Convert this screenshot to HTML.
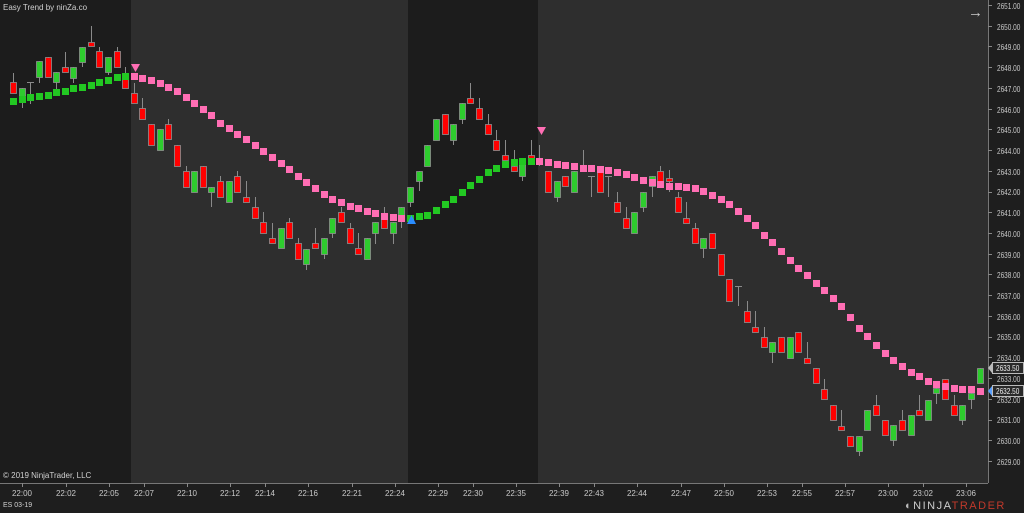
<!DOCTYPE html>
<html><head><meta charset="utf-8"><style>
html,body{margin:0;padding:0;background:#1e1e1e;width:1024px;height:513px;overflow:hidden;font-family:"Liberation Sans",sans-serif}
#c{position:absolute;left:0;top:0}
.t{position:absolute;color:#d0d0d0;font-size:8px;white-space:nowrap}
.p{position:absolute;left:997px;color:#c8c8c8;font-size:8.5px;transform:scaleX(0.76);transform-origin:0 0;white-space:nowrap}
.tm{position:absolute;top:489px;color:#c8c8c8;font-size:8px;transform:translateX(-50%)}
.bx{position:absolute;left:992px;width:30px;height:10px;background:#2a2a2a;border:1px solid #bbb;color:#eee;font-size:8.5px;line-height:10px;overflow:hidden;white-space:nowrap}
.bx span{display:inline-block;transform:scaleX(0.76);transform-origin:0 0;margin-left:3px}
</style></head><body>
<svg id="c" width="1024" height="513" xmlns="http://www.w3.org/2000/svg">
<rect x="0" y="0" width="1024" height="513" fill="#1e1e1e"/>
<rect x="0" y="0" width="988" height="483" fill="#2e2e2e"/>
<rect x="0" y="0" width="131" height="483" fill="#1c1c1c"/>
<rect x="408" y="0" width="130" height="483" fill="#1c1c1c"/>
<line x1="988.5" y1="0" x2="988.5" y2="483" stroke="#777"/>
<line x1="0" y1="483.5" x2="988" y2="483.5" stroke="#777"/>
<g id="g"></g>
</svg>
<div class="t" style="left:3px;top:3px">Easy Trend by ninZa.co</div>
<div class="t" style="left:3px;top:471px">© 2019 NinjaTrader, LLC</div>
<div class="t" style="left:3px;top:502px;font-size:7px">ES 03-19</div>
<div class="t" style="left:968px;top:4px;font-size:15px;color:#ccc">→</div>
<div class="t" style="left:905px;top:500px;font-size:11px;letter-spacing:1.5px;color:#bbb">◐<span style="color:#ccc">NINJA</span><span style="color:#c0392b">TRADER</span></div>
<div class="bx" style="top:362px"><span>2633.50</span></div>
<div class="bx" style="top:385px"><span>2632.50</span></div>
<div class="tm" style="left:22px">22:00</div><div class="tm" style="left:66px">22:02</div><div class="tm" style="left:109px">22:05</div><div class="tm" style="left:144px">22:07</div><div class="tm" style="left:187px">22:10</div><div class="tm" style="left:230px">22:12</div><div class="tm" style="left:265px">22:14</div><div class="tm" style="left:308px">22:16</div><div class="tm" style="left:352px">22:21</div><div class="tm" style="left:395px">22:24</div><div class="tm" style="left:438px">22:29</div><div class="tm" style="left:473px">22:30</div><div class="tm" style="left:516px">22:35</div><div class="tm" style="left:559px">22:39</div><div class="tm" style="left:594px">22:43</div><div class="tm" style="left:637px">22:44</div><div class="tm" style="left:681px">22:47</div><div class="tm" style="left:724px">22:50</div><div class="tm" style="left:767px">22:53</div><div class="tm" style="left:802px">22:55</div><div class="tm" style="left:845px">22:57</div><div class="tm" style="left:888px">23:00</div><div class="tm" style="left:923px">23:02</div><div class="tm" style="left:966px">23:06</div>
<div class="p" style="top:1px">2651.00</div><div class="p" style="top:22px">2650.00</div><div class="p" style="top:42px">2649.00</div><div class="p" style="top:63px">2648.00</div><div class="p" style="top:84px">2647.00</div><div class="p" style="top:105px">2646.00</div><div class="p" style="top:125px">2645.00</div><div class="p" style="top:146px">2644.00</div><div class="p" style="top:167px">2643.00</div><div class="p" style="top:187px">2642.00</div><div class="p" style="top:208px">2641.00</div><div class="p" style="top:229px">2640.00</div><div class="p" style="top:250px">2639.00</div><div class="p" style="top:270px">2638.00</div><div class="p" style="top:291px">2637.00</div><div class="p" style="top:312px">2636.00</div><div class="p" style="top:332px">2635.00</div><div class="p" style="top:353px">2634.00</div><div class="p" style="top:374px">2633.00</div><div class="p" style="top:395px">2632.00</div><div class="p" style="top:415px">2631.00</div><div class="p" style="top:436px">2630.00</div><div class="p" style="top:457px">2629.00</div>
<script>
var B=[
['r',82,93,73,93],['g',88,102,88,108],['d',82,83,82,104],['g',61,77,61,83],['r',57,77,57,77],['g',72,82,72,90],['r',67,72,52,72],['g',67,78,67,83],['g',47,62,47,67],['r',42,46,26,46],['r',51,67,47,67],['g',57,72,57,75],['r',51,67,47,67],['r',73,88,67,88],
['r',93,103,83,103],['r',108,119,98,119],['r',124,145,124,145],['g',129,150,129,150],['r',124,139,119,139],['r',145,166,145,166],['r',171,187,166,187],['g',171,192,171,192],['r',166,187,166,187],['g',187,192,187,207],['r',181,197,176,197],['g',181,202,181,202],['r',176,192,171,192],['r',197,202,181,202],['r',207,218,197,218],['r',222,233,212,233],['r',238,243,223,243],['g',228,248,228,248],['r',222,238,218,238],['r',243,259,238,259],['g',249,264,249,270],['r',243,248,228,248],['g',238,254,238,259],['g',218,233,218,238],['r',212,222,207,222],['r',228,243,223,243],['r',248,254,233,254],['g',238,259,238,259],['g',222,233,222,244],['r',218,228,207,228],['g',222,233,222,244],['g',207,218,207,228],['g',187,202,187,207],
['g',171,181,171,191],['g',145,166,145,166],['g',119,140,119,140],['r',114,134,114,134],['g',124,140,124,145],['g',103,119,103,124],['r',98,103,83,103],['r',108,119,98,119],['r',124,134,114,134],['r',140,150,130,150],['r',155,160,140,160],['r',166,171,150,171],['g',159,176,159,181],['r',155,158,140,158],['r',160,163,145,166],['r',171,192,171,192],['g',181,197,181,202],['r',176,186,176,186],['g',171,192,171,192],['r',165,170,150,170],['d',176,177,176,197],['r',171,192,171,192],['d',176,177,176,197],['r',202,212,192,212],['r',218,228,207,228],['g',212,233,212,233],['g',192,207,192,212],['g',176,186,176,197],['r',171,181,166,181],['r',178,181,170,192],['r',197,212,192,212],['r',218,223,202,223],['r',228,243,223,243],
['g',238,248,238,258],['r',233,248,233,248],['r',254,275,254,275],['r',279,301,279,301],['d',286,287,286,306],['r',311,322,301,322],['r',327,332,311,332],['r',337,347,327,347],['g',342,352,342,363],['r',337,352,337,352],['g',337,358,337,358],['r',332,352,332,352],['r',358,363,342,363],['r',368,383,368,383],['r',389,399,379,399],['r',405,420,405,420],['r',426,430,410,430],['r',436,446,436,446],['g',436,451,436,456],['g',410,430,410,430],['r',405,415,395,415],['r',420,435,420,435],['g',425,440,425,446],['r',420,430,410,430],['g',415,435,415,435],['r',410,415,395,415],['g',400,420,400,420],['g',388,393,388,404],['r',379,399,379,399],['r',405,415,395,415],['g',405,420,405,425],['g',393,399,393,409],['g',368,383,368,383]];
var P=[[13,101],[22,99],[31,97],[39,96],[48,95],[56,92],[65,91],[74,88],[82,87],[91,85],[100,82],[108,80],[117,77],[126,76],[135,76],[143,78],[152,80],[160,83],[169,87],[178,92],[187,98],[196,104],[204,110],[213,117],[221,124],[230,129],[239,135],[248,140],[256,146],[265,152],[274,158],[282,164],[291,171],[300,177],[308,184],[317,189],[326,195],[334,200],[343,203],[351,206],[360,209],[369,211],[377,214],[386,216],[395,217],[403,218],[412,218],[421,216],[429,214],[438,209],[447,203],[455,197],[464,190],[473,183],[481,177],[490,171],[499,167],[507,163],[516,162],[525,161],[533,161],[542,161],[551,162],[559,164],[568,165],[577,166],[585,168],[603,169],[611,171],[620,172],[629,175],[637,178],[646,181],[655,183],[663,185],[672,186],[681,186],[690,187],[698,189],[707,193],[716,196],[724,201],[733,207],[741,213],[750,221],[759,229],[767,238],[776,246],[785,255],[794,264],[802,271],[811,279],[820,286],[828,294],[837,302],[846,312],[854,322],[863,332],[872,341],[880,349],[889,357],[897,363],[906,369],[915,374],[924,379],[932,383],[941,385],[950,387],[958,389],[967,389],[976,390],[984,391]];
function iy(x){for(var i=0;i<P.length-1;i++){if(x<=P[i+1][0])return P[i][1]+(P[i+1][1]-P[i][1])*(x-P[i][0])/(P[i+1][0]-P[i][0]);}return P[P.length-1][1];}
var h='';
B.forEach(function(b,i){var x=13+8.63*i,xs=Math.round(x);
h+='<line x1="'+(xs+.5)+'" y1="'+b[3]+'" x2="'+(xs+.5)+'" y2="'+b[4]+'" stroke="#8a8a8a"/>';
var c=b[0]=='g'?'#2ecc2e':(b[0]=='r'?'#ff0000':'#8a8a8a');var hh=Math.max(b[2]-b[1],1);
if(b[0]=='d')h+='<rect x="'+(xs-3)+'" y="'+b[1]+'" width="7" height="1" fill="#8a8a8a"/>';
else h+='<rect x="'+(xs-2.5)+'" y="'+(b[1]+.5)+'" width="6" height="'+hh+'" fill="'+c+'" stroke="#909090" stroke-width="0.8"/>';});
B.forEach(function(b,i){var x=Math.round(13+8.63*i),y=Math.round(iy(x));
var pink=(i>=14&&i<=45)||i>=61;var col=pink?'#ff6eb4':'#22c822';
h+='<rect x="'+(x-3)+'" y="'+(y-3)+'" width="7" height="7" fill="'+col+'"/>';});
h+='<polygon points="131,64 140,64 135.5,72" fill="#ff6eb4"/>';
h+='<polygon points="407,224 416,224 411.5,215" fill="#2a8cff"/>';
h+='<polygon points="537,127 546,127 541.5,135" fill="#ff6eb4"/>';
for(var p=0;p<23;p++){var y=Math.round(5+p*20.73)+.5;h+='<line x1="988" y1="'+y+'" x2="992" y2="'+y+'" stroke="#888"/>';}
[22,66,109,144,187,230,265,308,352,395,438,473,516,559,594,637,681,724,767,802,845,888,923,966].forEach(function(x){h+='<line x1="'+(x+.5)+'" y1="483" x2="'+(x+.5)+'" y2="487" stroke="#888"/>';});
h+='<polygon points="988,368 992,363 992,373" fill="#bbb"/><polygon points="988,391 992,386 992,396" fill="#5aa0ff"/>';
document.getElementById('g').innerHTML=h;
</script>
</body></html>
